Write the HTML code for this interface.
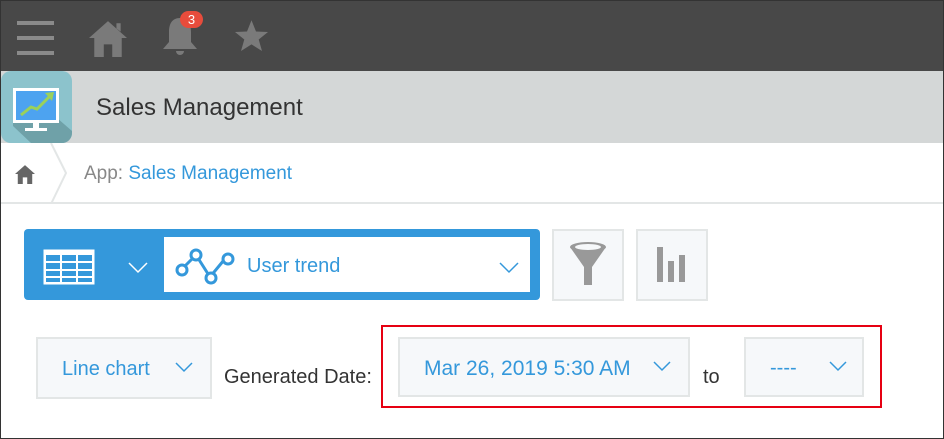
<!DOCTYPE html>
<html><head><style>
*{margin:0;padding:0;box-sizing:border-box}
body{width:944px;height:439px;overflow:hidden;font-family:"Liberation Sans",sans-serif;background:#fff;position:relative}
.frame{position:absolute;inset:0;border:1px solid #333;pointer-events:none;z-index:9}
.top{position:absolute;left:0;top:0;width:944px;height:71px;background:#484848}
.hdr{position:absolute;left:0;top:71px;width:944px;height:72px;background:#d4d7d7}
.bc{position:absolute;left:0;top:143px;width:944px;height:61px;border-bottom:2px solid #e3e6e6}
.a{position:absolute}
.sel{position:absolute;background:#f6f8fa;border:2px solid #e3e6e6;color:#3498db;font-size:20px}
</style></head><body>
<div class="top">
 <div class="a" style="left:17px;top:21px;width:37px;height:4px;background:#8a8a8a"></div>
 <div class="a" style="left:17px;top:36px;width:37px;height:4px;background:#8a8a8a"></div>
 <div class="a" style="left:17px;top:51px;width:37px;height:4px;background:#8a8a8a"></div>
 <svg class="a" style="left:89px;top:19px" width="38" height="38" viewBox="0 0 36 36"><path d="M18 2 L36 18 L31 18 L31 36 L22 36 L22 24 L14 24 L14 36 L5 36 L5 18 L0 18 Z M26 4 L30 4 L30 12 L26 9 Z" fill="#7a7a7a"/></svg>
 <svg class="a" style="left:161px;top:14px" width="38" height="44" viewBox="0 0 38 44"><path d="M19 4 C11 4 8 10 8 18 L8 28 L2 35 L36 35 L30 28 L30 18 C30 10 27 4 19 4 Z M15 37 A4 4 0 0 0 23 37 Z" fill="#7a7a7a"/></svg>
 <div class="a" style="left:180px;top:11px;width:23px;height:17px;border-radius:9px;background:#e74c3c;color:#fff;font-size:13px;text-align:center;line-height:17px">3</div>
 <svg class="a" style="left:233px;top:18px" width="37" height="36" viewBox="0 0 24 24"><path d="M12 1.5 L15 9 L23 9.3 L16.8 14.3 L19 22 L12 17.6 L5 22 L7.2 14.3 L1 9.3 L9 9 Z" fill="#7a7a7a"/></svg>
</div>
<div class="hdr">
 <div class="a" style="left:1px;top:0;width:71px;height:72px;border-radius:10px;background:#8cc3cc;overflow:hidden">
  <svg width="71" height="72"><path d="M12 40 L48 40 L71 60 L71 72 L30 72 L12 55Z" fill="#6fa1a8"/><rect x="12" y="17" width="46" height="35" fill="#fff"/><rect x="15" y="20" width="40" height="29" fill="#4da3f0"/><rect x="32" y="52" width="6" height="5" fill="#fff"/><rect x="24" y="57" width="22" height="3" fill="#fff"/><path d="M20 44 L30 36 L36 38 L50 24" stroke="#9bd15a" stroke-width="3" fill="none"/><path d="M44 22 L53 21 L51 30Z" fill="#9bd15a"/></svg>
 </div>
 <div class="a" style="left:96px;top:23px;font-size:24px;color:#333">Sales Management</div>
</div>
<div class="bc">
 <svg class="a" style="left:15px;top:21px" width="20" height="20" viewBox="0 0 36 36"><path d="M18 2 L36 18 L31 18 L31 36 L22 36 L22 24 L14 24 L14 36 L5 36 L5 18 L0 18 Z" fill="#666"/></svg>
 <svg class="a" style="left:50px;top:0" width="20" height="61"><path d="M1 0 L16 30 L1 61" stroke="#e3e6e6" stroke-width="2" fill="none"/></svg>
 <div class="a" style="left:84px;top:20px;font-size:19px;color:#888">App: <span style="color:#3498db">Sales Management</span></div>
</div>
<div class="a" style="left:24px;top:229px;width:516px;height:71px;background:#3498db;border-radius:4px"></div>
<svg class="a" style="left:42px;top:248px" width="54" height="38"><rect x="1.5" y="1.5" width="51" height="35" fill="#fff"/><g fill="#3498db"><rect x="4" y="7" width="14" height="6"/><rect x="20" y="7" width="14" height="6"/><rect x="36" y="7" width="14" height="6"/><rect x="4" y="15" width="14" height="6"/><rect x="20" y="15" width="14" height="6"/><rect x="36" y="15" width="14" height="6"/><rect x="4" y="23" width="14" height="5"/><rect x="20" y="23" width="14" height="5"/><rect x="36" y="23" width="14" height="5"/><rect x="4" y="30" width="14" height="4"/><rect x="20" y="30" width="14" height="4"/><rect x="36" y="30" width="14" height="4"/></g></svg>
<svg class="a" style="left:127px;top:261px" width="22" height="14"><path d="M2 2 L11 11 L20 2" stroke="#fff" stroke-width="1.5" fill="none"/></svg>
<div class="a" style="left:164px;top:237px;width:366px;height:55px;background:#fff"></div>
<svg class="a" style="left:174px;top:247px" width="64" height="38"><path d="M8 22 L22 8 L36 30 L50 13" stroke="#3498db" stroke-width="3" fill="none"/><g fill="#fff" stroke="#3498db" stroke-width="3"><circle cx="8" cy="23" r="5"/><circle cx="22" cy="8" r="5"/><circle cx="37" cy="31" r="5"/><circle cx="54" cy="12" r="5"/></g></svg>
<div class="a" style="left:247px;top:255px;font-size:20px;color:#3498db">User trend</div>
<svg class="a" style="left:498px;top:261px" width="22" height="14"><path d="M2 2 L11 11 L20 2" stroke="#3498db" stroke-width="1.5" fill="none"/></svg>
<div class="a" style="left:552px;top:229px;width:72px;height:72px;background:#f6f8fa;border:2px solid #e3e6e6"></div>
<svg class="a" style="left:566px;top:241px" width="44" height="46"><ellipse cx="22" cy="6" rx="18" ry="5" fill="#999"/><path d="M4 6 L18 26 L18 44 L26 44 L26 26 L40 6Z" fill="#999"/><ellipse cx="22" cy="6" rx="13" ry="3" fill="#f6f8fa"/></svg>
<div class="a" style="left:636px;top:229px;width:72px;height:72px;background:#f6f8fa;border:2px solid #e3e6e6"></div>
<svg class="a" style="left:656px;top:247px" width="32" height="36"><rect x="1" y="0" width="6" height="35" fill="#999"/><rect x="12" y="14" width="6" height="21" fill="#999"/><rect x="23" y="8" width="6" height="27" fill="#999"/></svg>
<div class="sel" style="left:36px;top:337px;width:176px;height:62px"><span class="a" style="left:24px;top:19px">Line chart</span><svg class="a" style="left:136px;top:22px" width="20" height="14"><path d="M2 2 L10 10 L18 2" stroke="#3498db" stroke-width="1.5" fill="none"/></svg></div>
<div class="a" style="left:224px;top:366px;font-size:20px;color:#333">Generated Date:</div>
<div class="a" style="left:381px;top:325px;width:501px;height:83px;border:2px solid #e60012"></div>
<div class="sel" style="left:398px;top:337px;width:292px;height:60px"><span class="a" style="left:24px;top:18px;font-size:21px">Mar 26, 2019 5:30 AM</span><svg class="a" style="left:252px;top:21px" width="20" height="14"><path d="M2 2 L10 10 L18 2" stroke="#3498db" stroke-width="1.5" fill="none"/></svg></div>
<div class="a" style="left:703px;top:366px;font-size:20px;color:#333">to</div>
<div class="sel" style="left:744px;top:337px;width:120px;height:60px"><span class="a" style="left:24px;top:18px">----</span><svg class="a" style="left:82px;top:21px" width="20" height="14"><path d="M2 2 L10 10 L18 2" stroke="#3498db" stroke-width="1.5" fill="none"/></svg></div>
<div class="frame"></div>
</body></html>
